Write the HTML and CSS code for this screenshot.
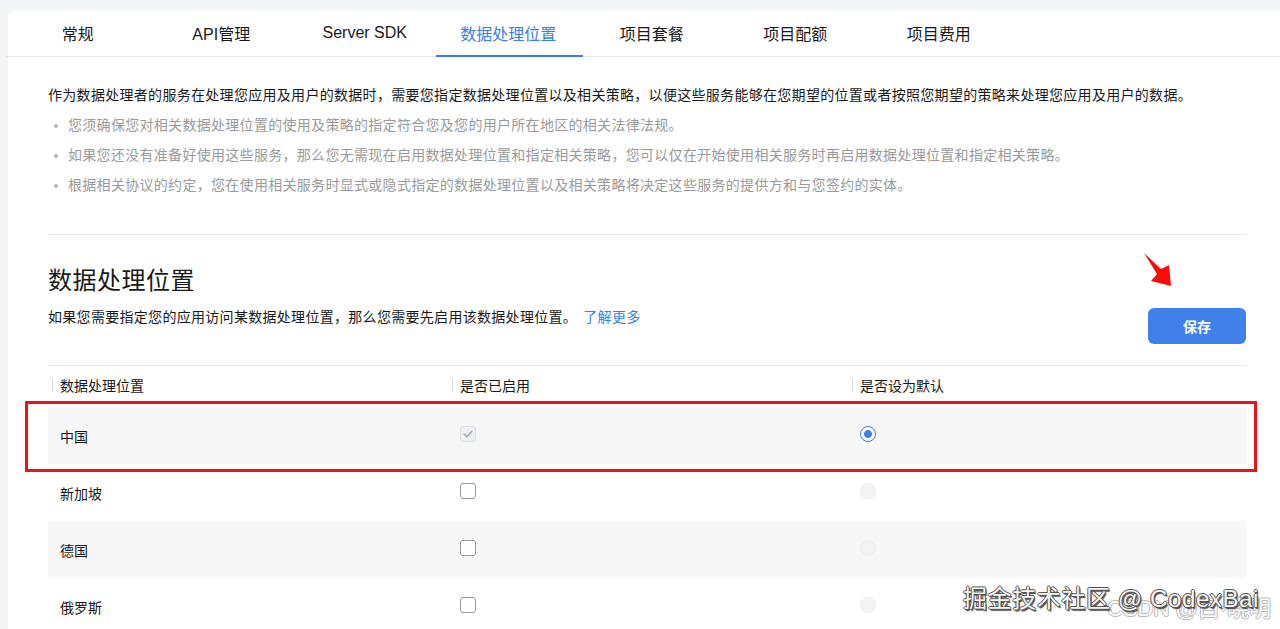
FILE: index.html
```html
<!DOCTYPE html>
<html lang="zh-CN">
<head>
<meta charset="utf-8">
<title>数据处理位置</title>
<link rel="stylesheet" href="styles.css">
</head>
<body>
<div class="card">
  <nav class="tabs">
    <div class="tab">常规</div>
    <div class="tab">API管理</div>
    <div class="tab">Server SDK</div>
    <div class="tab active">数据处理位置</div>
    <div class="tab">项目套餐</div>
    <div class="tab">项目配额</div>
    <div class="tab">项目费用</div>
  </nav>
  <div class="content">
    <p class="intro">作为数据处理者的服务在处理您应用及用户的数据时，需要您指定数据处理位置以及相关策略，以便这些服务能够在您期望的位置或者按照您期望的策略来处理您应用及用户的数据。</p>
    <ul class="notes">
      <li>您须确保您对相关数据处理位置的使用及策略的指定符合您及您的用户所在地区的相关法律法规。</li>
      <li>如果您还没有准备好使用这些服务，那么您无需现在启用数据处理位置和指定相关策略，您可以仅在开始使用相关服务时再启用数据处理位置和指定相关策略。</li>
      <li>根据相关协议的约定，您在使用相关服务时显式或隐式指定的数据处理位置以及相关策略将决定这些服务的提供方和与您签约的实体。</li>
    </ul>
    <div class="divider"></div>
    <div class="sec-head">
      <div class="sec-text">
        <h2 class="title">数据处理位置</h2>
        <p class="sub">如果您需要指定您的应用访问某数据处理位置，那么您需要先启用该数据处理位置。 <a class="link">了解更多</a></p>
      </div>
      <button class="btn">保存</button>
    </div>
    <div class="table">
      <div class="row head">
        <div class="cell">数据处理位置</div>
        <div class="cell">是否已启用</div>
        <div class="cell">是否设为默认</div>
      </div>
      <div class="row stripe">
        <div class="cell">中国</div>
        <div class="cell"><span class="cb cb-disabled-checked"><svg viewBox="0 0 16 16" width="16" height="16"><path d="M4.2 8.2 L6.9 10.8 L11.8 5.4" fill="none" stroke="#a3a7ad" stroke-width="1.5" stroke-linecap="round" stroke-linejoin="round"/></svg></span></div>
        <div class="cell"><span class="radio radio-on"></span></div>
      </div>
      <div class="row">
        <div class="cell">新加坡</div>
        <div class="cell"><span class="cb"></span></div>
        <div class="cell"><span class="radio radio-off"></span></div>
      </div>
      <div class="row stripe">
        <div class="cell">德国</div>
        <div class="cell"><span class="cb"></span></div>
        <div class="cell"><span class="radio radio-off"></span></div>
      </div>
      <div class="row">
        <div class="cell">俄罗斯</div>
        <div class="cell"><span class="cb"></span></div>
        <div class="cell"><span class="radio radio-off"></span></div>
      </div>
    </div>
  </div>
</div>

<div class="mark-box"></div>
<svg class="mark-arrow" viewBox="0 0 60 60" width="60" height="60"><polygon points="14,13 31,29 39,25 41,46 21,41 27,34" fill="#ff0a0a"/></svg>

<div class="wm wm-csdn">CSDN @白·晓明</div>
<div class="wm wm-juejin">掘金技术社区 @ CodexBai</div>
</body>
</html>
```
FILE: styles.css
```css
html, body {
  margin: 0;
  height: 100%;
  overflow: hidden;
}
body {
  background: #f3f4f5;
  font-family: "Liberation Sans", "Noto Sans CJK SC", sans-serif;
  color: #191919;
  position: relative;
}
.card {
  margin: 10px 0 0 8px;
  background: #fff;
  border-top-left-radius: 8px;
  height: 660px;
}
.tabs {
  display: flex;
  height: 46px;
  border-bottom: 1px solid #e6e6e6;
  margin-left: -2px;
}
.tab {
  flex: none;
  width: 143.5px;
  display: flex;
  align-items: center;
  justify-content: center;
  font-size: 16px;
  position: relative;
}
.tab.active {
  color: #3a7ee6;
}
.tab.active::after {
  content: "";
  position: absolute;
  left: -1px;
  right: -3px;
  bottom: -1px;
  height: 2px;
  background: #3a7ee6;
}
.content {
  padding: 23px 34px 0 40px;
}
.intro {
  margin: 0;
  font-size: 14px;
  line-height: 30px;
  letter-spacing: 0.3px;
}
.notes {
  list-style: none;
  margin: 0;
  padding: 0;
  font-size: 14px;
  line-height: 30px;
  color: #9a9a9a;
  letter-spacing: 0.3px;
}
.notes li {
  position: relative;
  padding-left: 20px;
}
.notes li::before {
  content: "";
  position: absolute;
  left: 6px;
  top: 14px;
  width: 4px;
  height: 4px;
  border-radius: 50%;
  background: #b5b5b5;
}
.divider {
  margin-top: 34px;
  border-top: 1px solid #e8e8e8;
}
.sec-head {
  display: flex;
  justify-content: space-between;
  align-items: flex-end;
  margin-bottom: 21px;
}
.title {
  margin: 29px 0 0;
  font-size: 24px;
  line-height: 34px;
  font-weight: 400;
  letter-spacing: 0.5px;
}
.sub {
  margin: 8px 0 16px;
  font-size: 14px;
  line-height: 22px;
  letter-spacing: 0.3px;
}
.link {
  color: #3a7ee6;
  margin-left: 2px;
}
.btn {
  width: 98px;
  height: 36px;
  border: none;
  border-radius: 6px;
  background: #3f80ea;
  color: #fff;
  font-family: "Liberation Sans", "Noto Sans CJK SC", sans-serif;
  font-size: 14px;
  font-weight: 700;
  padding: 0;
}
.table {
  border-top: 1px solid #e8e8e8;
}
.row {
  display: grid;
  grid-template-columns: 400px 400px 1fr;
  height: 57px;
  align-items: center;
  font-size: 14px;
}
.row.head {
  height: 41px;
  padding-bottom: 3px;
  box-sizing: border-box;
}
.row.stripe {
  background: #f7f7f8;
}
.cell {
  padding-left: 12px;
  display: flex;
  align-items: center;
  position: relative;
}
.head .cell::before {
  content: "";
  position: absolute;
  left: 4px;
  top: 3px;
  width: 1px;
  height: 14px;
  background: #dcdcdc;
}
.cb {
  width: 16px;
  height: 16px;
  box-sizing: border-box;
  border: 1px solid #9a9a9a;
  border-radius: 3px;
  background: #fff;
  display: block;
  margin-top: -4px;
}
.cb svg {
  display: block;
  margin: -1px;
}
.cb-disabled-checked {
  border-color: #dcdfe3;
  background: #eef0f3;
}
.radio {
  width: 16px;
  height: 16px;
  box-sizing: border-box;
  border-radius: 50%;
  display: block;
  margin-top: -4px;
}
.radio-on {
  border: 1.5px solid #3a7ee6;
  background: radial-gradient(circle, #3a7ee6 0 3.6px, #fff 4.2px);
}
.radio-off {
  border: 1px solid #ececec;
  background: #f4f4f5;
}
.mark-box {
  position: absolute;
  left: 25px;
  top: 401px;
  width: 1232px;
  height: 71px;
  box-sizing: border-box;
  border: 3px solid #e8141a;
}
.mark-arrow {
  position: absolute;
  left: 1130px;
  top: 240px;
}
.wm {
  position: absolute;
  white-space: nowrap;
  font-family: "Liberation Sans", "Noto Sans CJK SC", sans-serif;
}
.wm-csdn {
  left: 1107px;
  top: 590px;
  font-size: 22px;
  color: #fbfbfb;
  text-shadow: 1px 0 0 #b9b9b9, -1px 0 0 #b9b9b9, 0 1px 0 #b9b9b9, 0 -1px 0 #b9b9b9;
}
.wm-juejin {
  left: 963px;
  top: 579px;
  font-size: 24px;
  letter-spacing: 0.6px;
  color: #f4f4f4;
  text-shadow: 1px 0 0 #555, -1px 0 0 #555, 0 1px 0 #555, 0 -1px 0 #555, 1.5px 1.5px 1px #444;
}
```
